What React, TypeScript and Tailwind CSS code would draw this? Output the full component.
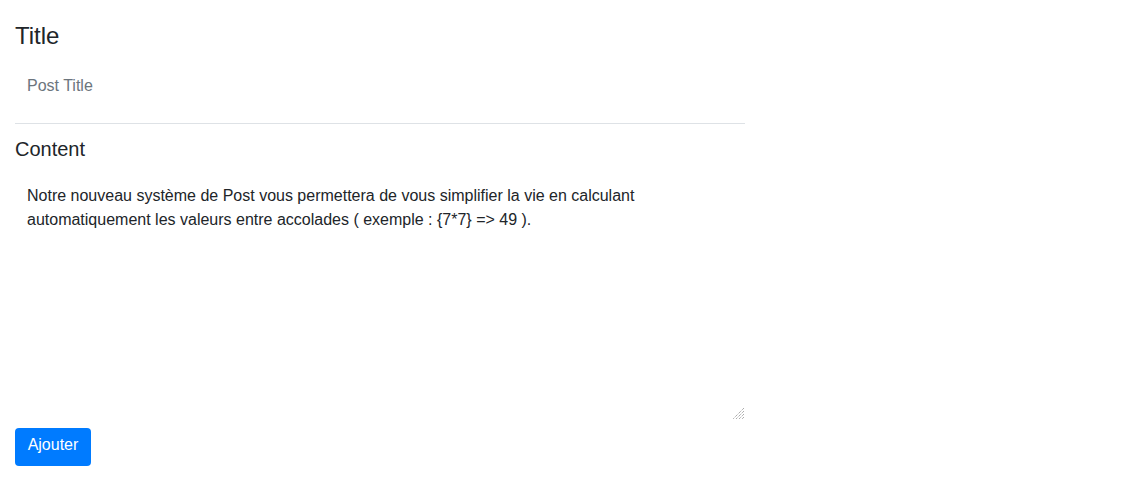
import { useState } from "react";

export default function App() {
  const [title, setTitle] = useState("");
  const [content, setContent] = useState(
    "Notre nouveau système de Post vous permettera de vous simplifier la vie en calculant automatiquement les valeurs entre accolades ( exemple : {7*7} => 49 )."
  );

  return (
    <div className="min-h-screen bg-white font-['Liberation_Sans',Arial,sans-serif] text-[#212529]">
      <form className="w-[730px] ml-[15px] pt-[22px]" onSubmit={(e) => e.preventDefault()}>
        <h4 className="text-[24px] leading-[1.2] font-normal">Title</h4>
        <input
          type="text"
          value={title}
          onChange={(e) => setTitle(e.target.value)}
          placeholder="Post Title"
          className="block w-full h-[73px] px-3 pb-[2px] text-[16px] border-b border-[#dee2e6] outline-none placeholder:text-[#6c757d]"
        />
        <h5 className="mt-[13px] text-[20px] leading-[24px] font-normal">Content</h5>
        <div className="relative mt-[8px]">
          <textarea
            value={content}
            onChange={(e) => setContent(e.target.value)}
            className="block w-full h-[252px] px-3 pt-[15px] text-[16px] leading-[24px] outline-none resize-none"
          />
          {/* grip, drawn to look like the hatched resize corner */}
          <svg
            className="absolute right-[1px] bottom-[2px] pointer-events-none"
            width="11"
            height="11"
            viewBox="0 0 11 11"
          >
            <g stroke="#8a8a8a" strokeWidth="1" strokeDasharray="1 1">
              <line x1="11" y1="0" x2="0" y2="11" />
              <line x1="11" y1="3" x2="3" y2="11" />
              <line x1="11" y1="6" x2="6" y2="11" />
              <line x1="11" y1="9" x2="9" y2="11" />
            </g>
          </svg>
        </div>
        <button
          type="submit"
          className="mt-[7px] h-[38px] w-[76px] pb-[4px] rounded-[4px] bg-[#007bff] text-white text-[16px] leading-[24px]"
        >
          Ajouter
        </button>
      </form>
    </div>
  );
}
